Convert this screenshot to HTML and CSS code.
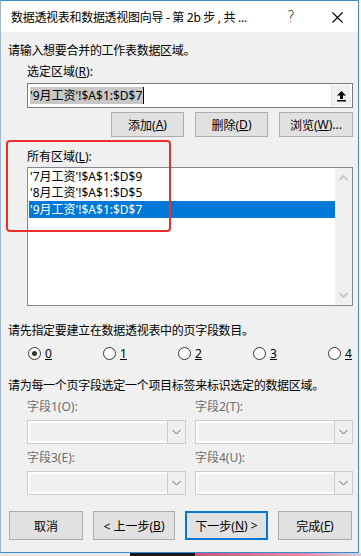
FILE: index.html
```html
<!DOCTYPE html>
<html>
<head>
<meta charset="utf-8">
<link rel="stylesheet" href="styles.css">
</head>
<body>
<div class="window">
  <div class="titlebar">
    <span class="title">数据透视表和数据透视图向导 - 第 2b 步 , 共 ...</span>
    <span class="help">?</span>
    <svg class="close" width="11" height="11" viewBox="0 0 11 11"><path d="M0.5 0.5 L10.5 10.5 M10.5 0.5 L0.5 10.5" stroke="#000" stroke-width="1.1" fill="none"/></svg>
  </div>

  <div class="content">
    <div class="intro">请输入想要合并的工作表数据区域。</div>
    <div class="label indent">选定区域(<u>R</u>):</div>
    <div class="rangebox">
      <div class="rangetext"><span class="sel">'9月工资'!$A$1:$D$7</span><span class="caret"></span></div>
      <div class="collapse">
        <svg width="11" height="12" viewBox="0 0 11 12"><path d="M5.5 1 L10 5.5 L7 5.5 L7 9 L4 9 L4 5.5 L1 5.5 Z" fill="#000"/><rect x="1" y="10" width="9" height="1.5" fill="#000"/></svg>
      </div>
    </div>
    <div class="btnrow">
      <div class="btn">添加(<u>A</u>)</div>
      <div class="btn">删除(<u>D</u>)</div>
      <div class="btn">浏览(<u>W</u>)...</div>
    </div>

    <div class="label indent list-label">所有区域(<u>L</u>):</div>
    <div class="listbox">
      <div class="items">
        <div class="item">'7月工资'!$A$1:$D$9</div>
        <div class="item">'8月工资'!$A$1:$D$5</div>
        <div class="item selected">'9月工资'!$A$1:$D$7</div>
      </div>
      <div class="vscroll">
        <svg width="9" height="6" viewBox="0 0 9 6"><path d="M0.5 5 L4.5 1 L8.5 5" stroke="#c2c2c2" stroke-width="1.6" fill="none"/></svg>
        <svg width="9" height="6" viewBox="0 0 9 6"><path d="M0.5 1 L4.5 5 L8.5 1" stroke="#c2c2c2" stroke-width="1.6" fill="none"/></svg>
      </div>
    </div>

    <div class="intro page-q">请先指定要建立在数据透视表中的页字段数目。</div>
    <div class="radios">
      <div class="radio"><span class="dot checked"></span><u>0</u></div>
      <div class="radio"><span class="dot"></span><u>1</u></div>
      <div class="radio"><span class="dot"></span><u>2</u></div>
      <div class="radio"><span class="dot"></span><u>3</u></div>
      <div class="radio"><span class="dot"></span><u>4</u></div>
    </div>

    <div class="intro field-q">请为每一个页字段选定一个项目标签来标识选定的数据区域。</div>
    <div class="fields">
      <div class="field">
        <div class="flabel">字段1(O):</div>
        <div class="combo"><div class="cfield"></div><div class="cdrop"><svg width="9" height="6" viewBox="0 0 9 6"><path d="M0.5 1 L4.5 5 L8.5 1" stroke="#606060" stroke-width="1" fill="none"/></svg></div></div>
      </div>
      <div class="field">
        <div class="flabel">字段2(T):</div>
        <div class="combo"><div class="cfield"></div><div class="cdrop"><svg width="9" height="6" viewBox="0 0 9 6"><path d="M0.5 1 L4.5 5 L8.5 1" stroke="#606060" stroke-width="1" fill="none"/></svg></div></div>
      </div>
      <div class="field">
        <div class="flabel">字段3(E):</div>
        <div class="combo"><div class="cfield"></div><div class="cdrop"><svg width="9" height="6" viewBox="0 0 9 6"><path d="M0.5 1 L4.5 5 L8.5 1" stroke="#606060" stroke-width="1" fill="none"/></svg></div></div>
      </div>
      <div class="field">
        <div class="flabel">字段4(U):</div>
        <div class="combo"><div class="cfield"></div><div class="cdrop"><svg width="9" height="6" viewBox="0 0 9 6"><path d="M0.5 1 L4.5 5 L8.5 1" stroke="#606060" stroke-width="1" fill="none"/></svg></div></div>
      </div>
    </div>

    <div class="footer">
      <div class="btn">取消</div>
      <div class="btn">&lt; 上一步(<u>B</u>)</div>
      <div class="btn default">下一步(<u>N</u>) &gt;</div>
      <div class="btn">完成(<u>F</u>)</div>
    </div>

    <!-- red annotation frame -->
    <div class="mark"></div>
  </div>
</div>
<div class="desk"></div>
</body>
</html>
```

FILE: styles.css
```css
body {
  margin: 0;
  background: #ffffff;
  font-family: "Noto Sans", "Noto Sans CJK SC", sans-serif;
  font-size: 12px;
  color: #000;
}

u {
  text-decoration: underline;
  text-underline-offset: 1px;
}

.window {
  width: 357px;
  height: 551px;
  border: 1px solid #3b8ad6;
  border-left-color: #9fb8cf;
  background: #f0f0f0;
  display: flex;
  flex-direction: column;
}

/* Title bar */
.titlebar {
  height: 31px;
  background: #fff;
  display: flex;
  align-items: center;
  padding-left: 10px;
}
.title {
  width: 276px;
  letter-spacing: -0.3px;
  white-space: nowrap;
}
.help {
  font-size: 15px;
  font-family: "DejaVu Sans", sans-serif;
  font-weight: 300;
  color: #222;
  width: 45px;
}
.close {
  margin-top: 1px;
}

/* Body */
.content {
  position: relative;
  flex: 1;
  padding: 0 5px 0 7px;
}
.intro {
  height: 17px;
  line-height: 17px;
  margin-top: 10px;
  letter-spacing: -0.3px;
}
.label {
  height: 17px;
  line-height: 17px;
}
.indent {
  padding-left: 19px;
  margin-top: 4px;
}

.rangebox {
  margin: 3px 0 0 19px;
  height: 23px;
  border: 1px solid #7a7a7a;
  background: #fff;
  display: flex;
}
.rangetext {
  flex: 1;
  display: flex;
  align-items: center;
  padding-left: 2px;
}
.sel {
  background: #c8c8c8;
  line-height: 17px;
  padding-right: 1px;
}
.caret {
  width: 1px;
  height: 17px;
  background: #000;
}
.collapse {
  width: 19px;
  margin: 1px 1px 1px 0;
  background: #f0f0f0;
  border-left: 1px solid #e0e0e0;
  display: flex;
  align-items: center;
  justify-content: center;
}

.btn {
  height: 23px;
  border: 1px solid #adadad;
  background: #e1e1e1;
  display: flex;
  align-items: center;
  justify-content: center;
  box-sizing: border-box;
}
.btnrow {
  margin-top: 4px;
  display: grid;
  grid-template-columns: 73px 73px 74px;
  justify-content: end;
  column-gap: 11px;
}
.btnrow .btn {
  height: 25px;
}

.list-label {
  margin-top: 11px;
}
.listbox {
  margin: 2px 0 0 19px;
  height: 137px;
  border: 1px solid #828790;
  background: #fff;
  display: flex;
}
.items {
  flex: 1;
  padding: 1px 0 0 1px;
}
.item {
  height: 16px;
  line-height: 16px;
  padding-left: 1px;
}
.item.selected {
  background: #0078d7;
  color: #fff;
  height: 17px;
  line-height: 17px;
}
.vscroll {
  width: 17px;
  background: #f0f0f0;
  display: flex;
  flex-direction: column;
  justify-content: space-between;
  align-items: center;
  padding: 7px 0 7px;
}

.page-q {
  margin-top: 16px;
}
.radios {
  margin: 6px 0 0 20px;
  height: 16px;
  display: grid;
  grid-template-columns: 75px 75px 75px 75px auto;
}
.radio {
  display: flex;
  align-items: center;
  gap: 4px;
}
.dot {
  width: 11px;
  height: 11px;
  border: 1px solid #333;
  border-radius: 50%;
  background: #fff;
  box-sizing: content-box;
  position: relative;
}
.dot.checked::after {
  content: "";
  position: absolute;
  left: 3px;
  top: 3px;
  width: 5px;
  height: 5px;
  border-radius: 50%;
  background: #333;
}

.field-q {
  margin-top: 16px;
}
.fields {
  margin: 4px 0 0 19px;
  display: grid;
  grid-template-columns: 159px 158px;
  column-gap: 9px;
  row-gap: 5px;
}
.flabel {
  color: #6d6d6d;
  height: 17px;
  line-height: 17px;
}
.combo {
  margin-top: 5px;
  height: 22px;
  border: 1px solid #cccccc;
  background: #f0f0f0;
  display: flex;
}
.cfield {
  flex: 1;
  border: 2px solid #fff;
  border-right: none;
}
.cdrop {
  width: 17px;
  border-left: 1px solid #cccccc;
  background: #f0f0f0;
  display: flex;
  align-items: center;
  justify-content: center;
}

.footer {
  margin-top: 16px;
  display: grid;
  grid-template-columns: 74px 82px 83px 74px;
  column-gap: 10px;
  padding-left: 1px;
}
.footer .btn {
  height: 29px;
}
.btn.default {
  border: 2px solid #0078d7;
}

/* annotation frame */
.mark {
  position: absolute;
  left: 5px;
  top: 108px;
  width: 161px;
  height: 88px;
  border: 2.5px solid #ec2d2d;
  border-radius: 4px;
}

.desk {
  height: 3px;
  background: linear-gradient(to right, #e8e8e8 0, #e8e8e8 130px, #1a1a1a 130px, #1a1a1a 195px, #c8577c 195px, #e08aa6 300px, #d0d0d0 361px);
}
```
